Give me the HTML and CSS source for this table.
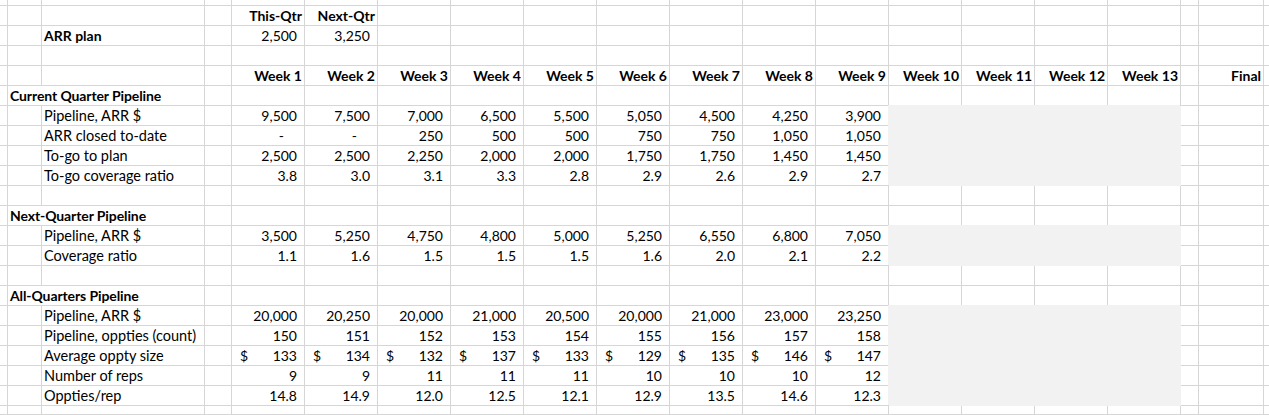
FILE: index.html
```html
<!DOCTYPE html>
<html lang="en">
<head>
<meta charset="utf-8">
<title>Pipeline coverage</title>
<link rel="stylesheet" href="styles.css">
</head>
<body>
<div class="sheet">
  <div class="row top"><span></span><span></span><span></span><span></span><span></span><span></span><span></span><span></span><span></span><span></span><span></span><span></span><span></span><span></span><span></span><span></span><span></span><span></span><span></span><span></span></div>
  <div class="row"><span></span><span></span><span></span><span></span><span class="hd">This-Qtr</span><span class="hd">Next-Qtr</span><span></span><span></span><span></span><span></span><span></span><span></span><span></span><span></span><span></span><span></span><span></span><span></span><span></span><span></span></div>
  <div class="row"><span></span><span></span><span class="lbl bold">ARR plan</span><span></span><span class="num">2,500</span><span class="num">3,250</span><span></span><span></span><span></span><span></span><span></span><span></span><span></span><span></span><span></span><span></span><span></span><span></span><span></span><span></span></div>
  <div class="row"><span></span><span></span><span></span><span></span><span></span><span></span><span></span><span></span><span></span><span></span><span></span><span></span><span></span><span></span><span></span><span></span><span></span><span></span><span></span><span></span></div>
  <div class="row"><span></span><span></span><span></span><span></span><span class="hd">Week 1</span><span class="hd">Week 2</span><span class="hd">Week 3</span><span class="hd">Week 4</span><span class="hd">Week 5</span><span class="hd">Week 6</span><span class="hd">Week 7</span><span class="hd">Week 8</span><span class="hd">Week 9</span><span class="hd">Week 10</span><span class="hd">Week 11</span><span class="hd">Week 12</span><span class="hd">Week 13</span><span></span><span class="hd final">Final</span><span></span></div>

  <div class="row"><span></span><span class="sec">Current Quarter Pipeline</span><span></span><span></span><span></span><span></span><span></span><span></span><span></span><span></span><span></span><span></span><span></span><span></span><span></span><span></span><span></span><span></span><span></span></div>
  <div class="row"><span></span><span></span><span class="lbl">Pipeline, ARR $</span><span></span><span class="num">9,500</span><span class="num">7,500</span><span class="num">7,000</span><span class="num">6,500</span><span class="num">5,500</span><span class="num">5,050</span><span class="num">4,500</span><span class="num">4,250</span><span class="num">3,900</span><span class="fill"></span><span class="fill"></span><span class="fill"></span><span class="fill"></span><span></span><span></span><span></span></div>
  <div class="row"><span></span><span></span><span class="lbl">ARR closed to-date</span><span></span><span class="zero">-</span><span class="zero">-</span><span class="num">250</span><span class="num">500</span><span class="num">500</span><span class="num">750</span><span class="num">750</span><span class="num">1,050</span><span class="num">1,050</span><span class="fill"></span><span class="fill"></span><span class="fill"></span><span class="fill"></span><span></span><span></span><span></span></div>
  <div class="row"><span></span><span></span><span class="lbl">To-go to plan</span><span></span><span class="num">2,500</span><span class="num">2,500</span><span class="num">2,250</span><span class="num">2,000</span><span class="num">2,000</span><span class="num">1,750</span><span class="num">1,750</span><span class="num">1,450</span><span class="num">1,450</span><span class="fill"></span><span class="fill"></span><span class="fill"></span><span class="fill"></span><span></span><span></span><span></span></div>
  <div class="row"><span></span><span></span><span class="lbl">To-go coverage ratio</span><span></span><span class="num">3.8</span><span class="num">3.0</span><span class="num">3.1</span><span class="num">3.3</span><span class="num">2.8</span><span class="num">2.9</span><span class="num">2.6</span><span class="num">2.9</span><span class="num">2.7</span><span class="fill"></span><span class="fill"></span><span class="fill"></span><span class="fill"></span><span></span><span></span><span></span></div>
  <div class="row"><span></span><span></span><span></span><span></span><span></span><span></span><span></span><span></span><span></span><span></span><span></span><span></span><span></span><span></span><span></span><span></span><span></span><span></span><span></span><span></span></div>

  <div class="row"><span></span><span class="sec">Next-Quarter Pipeline</span><span></span><span></span><span></span><span></span><span></span><span></span><span></span><span></span><span></span><span></span><span></span><span></span><span></span><span></span><span></span><span></span><span></span></div>
  <div class="row"><span></span><span></span><span class="lbl">Pipeline, ARR $</span><span></span><span class="num">3,500</span><span class="num">5,250</span><span class="num">4,750</span><span class="num">4,800</span><span class="num">5,000</span><span class="num">5,250</span><span class="num">6,550</span><span class="num">6,800</span><span class="num">7,050</span><span class="fill"></span><span class="fill"></span><span class="fill"></span><span class="fill"></span><span></span><span></span><span></span></div>
  <div class="row"><span></span><span></span><span class="lbl">Coverage ratio</span><span></span><span class="num">1.1</span><span class="num">1.6</span><span class="num">1.5</span><span class="num">1.5</span><span class="num">1.5</span><span class="num">1.6</span><span class="num">2.0</span><span class="num">2.1</span><span class="num">2.2</span><span class="fill"></span><span class="fill"></span><span class="fill"></span><span class="fill"></span><span></span><span></span><span></span></div>
  <div class="row"><span></span><span></span><span></span><span></span><span></span><span></span><span></span><span></span><span></span><span></span><span></span><span></span><span></span><span></span><span></span><span></span><span></span><span></span><span></span><span></span></div>

  <div class="row"><span></span><span class="sec">All-Quarters Pipeline</span><span></span><span></span><span></span><span></span><span></span><span></span><span></span><span></span><span></span><span></span><span></span><span></span><span></span><span></span><span></span><span></span><span></span></div>
  <div class="row"><span></span><span></span><span class="lbl">Pipeline, ARR $</span><span></span><span class="num">20,000</span><span class="num">20,250</span><span class="num">20,000</span><span class="num">21,000</span><span class="num">20,500</span><span class="num">20,000</span><span class="num">21,000</span><span class="num">23,000</span><span class="num">23,250</span><span class="fill"></span><span class="fill"></span><span class="fill"></span><span class="fill"></span><span></span><span></span><span></span></div>
  <div class="row"><span></span><span></span><span class="lbl">Pipeline, oppties (count)</span><span></span><span class="num">150</span><span class="num">151</span><span class="num">152</span><span class="num">153</span><span class="num">154</span><span class="num">155</span><span class="num">156</span><span class="num">157</span><span class="num">158</span><span class="fill"></span><span class="fill"></span><span class="fill"></span><span class="fill"></span><span></span><span></span><span></span></div>
  <div class="row"><span></span><span></span><span class="lbl">Average oppty size</span><span></span><span class="usd"><i>$</i><i>133</i></span><span class="usd"><i>$</i><i>134</i></span><span class="usd"><i>$</i><i>132</i></span><span class="usd"><i>$</i><i>137</i></span><span class="usd"><i>$</i><i>133</i></span><span class="usd"><i>$</i><i>129</i></span><span class="usd"><i>$</i><i>135</i></span><span class="usd"><i>$</i><i>146</i></span><span class="usd"><i>$</i><i>147</i></span><span class="fill"></span><span class="fill"></span><span class="fill"></span><span class="fill"></span><span></span><span></span><span></span></div>
  <div class="row"><span></span><span></span><span class="lbl">Number of reps</span><span></span><span class="num">9</span><span class="num">9</span><span class="num">11</span><span class="num">11</span><span class="num">11</span><span class="num">10</span><span class="num">10</span><span class="num">10</span><span class="num">12</span><span class="fill"></span><span class="fill"></span><span class="fill"></span><span class="fill"></span><span></span><span></span><span></span></div>
  <div class="row"><span></span><span></span><span class="lbl">Oppties/rep</span><span></span><span class="num">14.8</span><span class="num">14.9</span><span class="num">12.0</span><span class="num">12.5</span><span class="num">12.1</span><span class="num">12.9</span><span class="num">13.5</span><span class="num">14.6</span><span class="num">12.3</span><span class="fill"></span><span class="fill"></span><span class="fill"></span><span class="fill"></span><span></span><span></span><span></span></div>
  <div class="row"><span></span><span></span><span></span><span></span><span></span><span></span><span></span><span></span><span></span><span></span><span></span><span></span><span></span><span></span><span></span><span></span><span></span><span></span><span></span><span></span></div>
</div>
</body>
</html>
```
FILE: styles.css
```css
* {
  box-sizing: border-box;
}

html,
body {
  margin: 0;
  padding: 0;
  background: #ffffff;
}

body {
  width: 1269px;
  height: 415px;
  overflow: hidden;
  font-family: Lato, "Open Sans", sans-serif;
  font-size: 14px;
  color: #000000;
}

.sheet {
  display: grid;
  grid-template-columns: 8px 34px 163px 27px repeat(13, 73px) 18px 65px 5px;
  grid-template-rows: 6px repeat(20, 20px) 9px;
  width: 1269px;
  height: 415px;
  overflow: hidden;
}

.row {
  display: contents;
}

.row > span {
  border-right: 1px solid #d6d6d6;
  border-bottom: 1px solid #d6d6d6;
  line-height: 19px;
  white-space: nowrap;
  padding: 0 2px;
  min-width: 0;
}

.row > span:last-child {
  border-right: none;
}

.top > span {
  line-height: 5px;
}

.hd {
  font-weight: 700;
  text-align: right;
  padding-right: 2px;
}

.final {
  padding-right: 3px;
}

.bold {
  font-weight: 700;
}

.row > .lbl {
  text-align: left;
  font-size: 14.5px;
}

.row > .lbl.bold {
  font-size: 14px;
}

.sec {
  grid-column: span 2;
  font-weight: 700;
  padding-left: 1px;
  letter-spacing: -0.1px;
}

.row > .num {
  text-align: right;
  padding-right: 7px;
}

.row > .zero {
  text-align: right;
  padding-right: 20px;
}

.row > .usd {
  display: flex;
  justify-content: space-between;
  padding: 0 7px 0 8px;
}

.usd i {
  font-style: normal;
}

.row > .fill {
  background: #f2f2f2;
  border-color: #f2f2f2;
  box-shadow: -1px -1px 0 #f2f2f2;
}
```
